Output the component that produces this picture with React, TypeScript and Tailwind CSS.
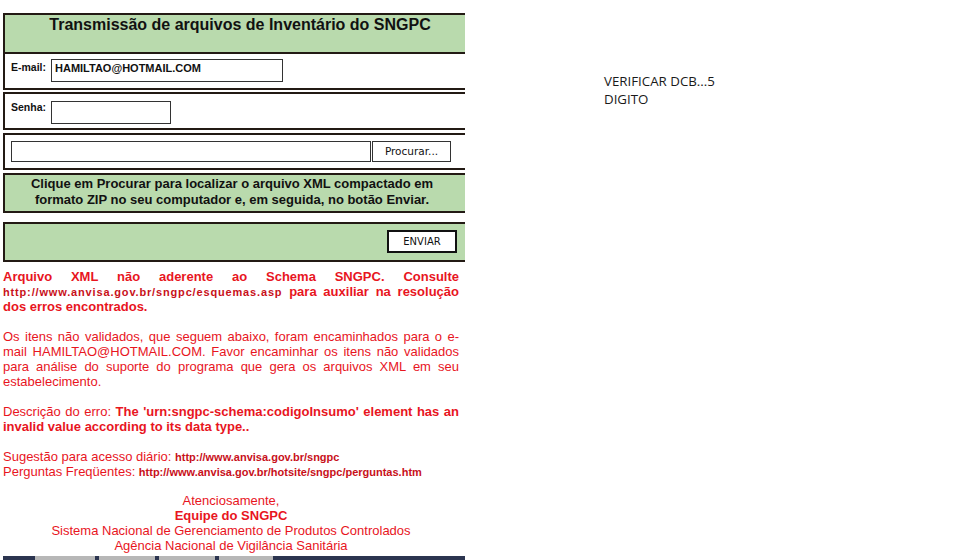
export default function App() {
  const red = "text-[#e8151e]";
  const link = "text-[11px] leading-none font-bold text-[#c8101a]";
  return (
    <div className="relative flex h-[560px] w-[960px] overflow-hidden bg-white font-['Liberation_Sans',Arial,sans-serif]">
      {/* left column, cropped at the right edge */}
      <div className="flex w-[465px] shrink-0 flex-col overflow-hidden pl-[3px] pt-[13px]">
        <div className="w-[480px]">
          {/* header */}
          <div className="h-[41px] border-2 border-[#231a14] bg-[#b9daad]">
            <div className="w-[470px] pt-[1px] text-center text-[16px] font-bold leading-[18px] text-[#111]">
              Transmissão de arquivos de Inventário do SNGPC
            </div>
          </div>

          {/* email */}
          <div className="flex h-[36px] items-start gap-[5px] border-x-2 border-b-2 border-[#231a14] pl-[6px] pt-[5px]">
            <span className="mt-[1px] text-[10.5px] font-bold text-[#111]">E-mail:</span>
            <div className="flex h-[23px] w-[232px] items-start border border-[#333] pl-[3px] text-[11px] font-bold leading-[16px] text-[#111]">
              HAMILTAO@HOTMAIL.COM
            </div>
          </div>

          {/* senha */}
          <div className="mt-[2px] flex h-[38px] items-start gap-[5px] border-2 border-[#231a14] pl-[6px] pt-[7px]">
            <span className="-mt-[1px] text-[10.5px] font-bold leading-[14px] text-[#111]">Senha:</span>
            <div className="h-[23px] w-[120px] border border-[#333]" />
          </div>

          {/* arquivo */}
          <div className="mt-[3px] flex h-[37px] items-start gap-[1px] border-2 border-[#231a14] pl-[6px] pt-[6px]">
            <div className="h-[21px] w-[360px] border border-[#333]" />
            <div className="flex h-[21px] w-[79px] items-center justify-center border border-[#333] font-['DejaVu_Sans',Tahoma,sans-serif] text-[10.5px] text-[#111]">
              Procurar...
            </div>
          </div>

          {/* instrucao */}
          <div className="mt-[3px] h-[40px] border-2 border-[#231a14] bg-[#b9daad] pt-[1px]">
            <div className="w-[454px] text-center text-[13px] font-bold leading-[16px] text-[#111]">
              Clique em Procurar para localizar o arquivo XML compactado em
              <br />
              formato ZIP no seu computador e, em seguida, no botão Enviar.
            </div>
          </div>

          {/* enviar */}
          <div className="mt-[9px] flex h-[40px] w-[462px] items-start justify-end border-y-2 border-l-2 border-[#231a14] bg-[#b9daad] pr-[8px] pt-[6px]">
            <div className="flex h-[23px] w-[70px] items-center justify-center border-2 border-[#111] bg-white font-['DejaVu_Sans',Tahoma,sans-serif] text-[10px] text-[#111]">
              ENVIAR
            </div>
          </div>
        </div>

        {/* mensagens */}
        <div className={`mt-[7px] w-[456px] text-[13px] leading-[15px] ${red}`}>
          <p className="text-justify">
            <b>Arquivo XML não aderente ao Schema SNGPC. Consulte </b>
            <b className="text-[11px] leading-none tracking-[0.84px] text-[#c8101a]">http://www.anvisa.gov.br/sngpc/esquemas.asp</b>
            <b> para auxiliar na resolução dos erros encontrados.</b>
          </p>
          <p className="mt-[15px] text-justify">
            Os itens não validados, que seguem abaixo, foram encaminhados para o e-mail HAMILTAO@HOTMAIL.COM. Favor
            encaminhar os itens não validados para análise do suporte do programa que gera os arquivos XML em seu
            estabelecimento.
          </p>
          <p className="mt-[15px] text-justify">
            Descrição do erro: <b>The 'urn:sngpc-schema:codigoInsumo' element has an invalid value according to its data type..</b>
          </p>
          <p className="mt-[15px]">
            Sugestão para acesso diário: <b className={link}>http://www.anvisa.gov.br/sngpc</b>
            <br />
            Perguntas Freqüentes: <b className={link}>http://www.anvisa.gov.br/hotsite/sngpc/perguntas.htm</b>
          </p>
          <div className="mt-[14px] text-center">
            <div>Atenciosamente,</div>
            <div className="font-bold">Equipe do SNGPC</div>
            <div>Sistema Nacional de Gerenciamento de Produtos Controlados</div>
            <div>Agência Nacional de Vigilância Sanitária</div>
          </div>
        </div>

        {/* barra inferior */}
        <div className="mt-auto flex h-[4px] w-[462px] gap-[4px] bg-[#2c3550] pl-[32px]">
          <div className="w-[60px] bg-[#b7b7b7]" />
          <div className="w-[56px] bg-[#b7b7b7]" />
          <div className="w-[56px] bg-[#b7b7b7]" />
          <div className="w-[54px] bg-[#b7b7b7]" />
        </div>
      </div>

      {/* nota a direita */}
      <div className="ml-[139px] mt-[72px] font-['Open_Sans',sans-serif] text-[13.3px] leading-[18px] text-[#1a1a1a]">
        <div>VERIFICAR DCB...5</div>
        <div>DIGITO</div>
      </div>
    </div>
  );
}
